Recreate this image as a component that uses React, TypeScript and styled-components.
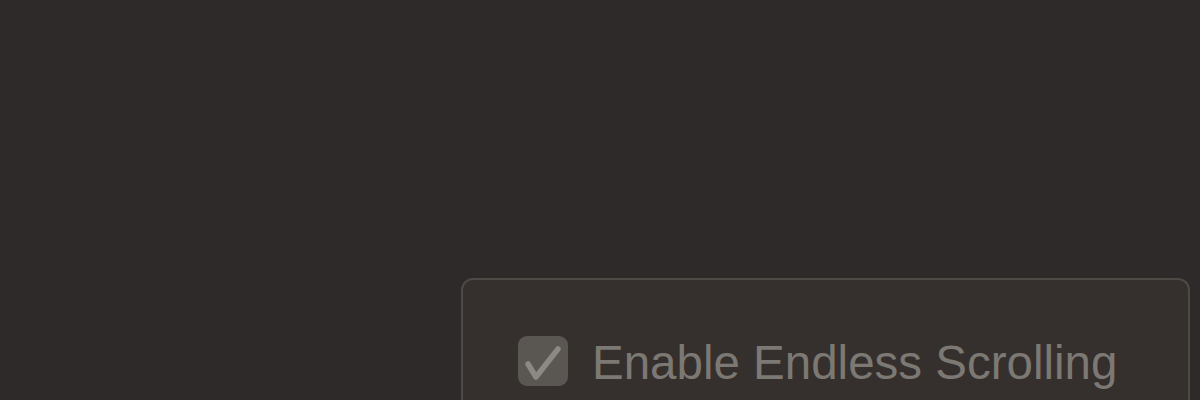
import React from "react";
import styled, { createGlobalStyle } from "styled-components";

const Global = createGlobalStyle`
  html, body {
    margin: 0;
    padding: 0;
    background: #2e2a2a;
    height: 100%;
    overflow: hidden;
  }
  #root { height: 100%; }
`;

const Page = styled.div`
  box-sizing: border-box;
  height: 400px;
  padding: 278px 10px 0 461px;
  display: flex;
  overflow: hidden;
  font-family: "Liberation Sans", Arial, sans-serif;
`;

const Panel = styled.section`
  box-sizing: border-box;
  flex: 1;
  background: #35302d;
  border: 2px solid #4d4945;
  border-bottom: none;
  border-radius: 12px 12px 0 0;
  padding: 55px 0 0 55px;
`;

const Row = styled.label`
  display: flex;
  align-items: center;
  gap: 24px;
`;

const Box = styled.span`
  width: 50px;
  height: 50px;
  border-radius: 9px;
  background: #5a5652;
  flex: none;
  display: block;
`;

const Label = styled.span`
  font-size: 47.5px;
  color: #7c7873;
  line-height: 1;
  padding-top: 4px;
`;

export default function App() {
  return (
    <>
      <Global />
      <Page>
        <Panel>
          <Row>
            <Box>
              <svg width="50" height="50" viewBox="0 0 50 50">
                <path
                  d="M10 28 L18 41 L40 13"
                  fill="none"
                  stroke="#8c8984"
                  strokeWidth="5.5"
                  strokeLinecap="round"
                  strokeLinejoin="round"
                />
              </svg>
            </Box>
            <Label>Enable Endless Scrolling</Label>
          </Row>
        </Panel>
      </Page>
    </>
  );
}
